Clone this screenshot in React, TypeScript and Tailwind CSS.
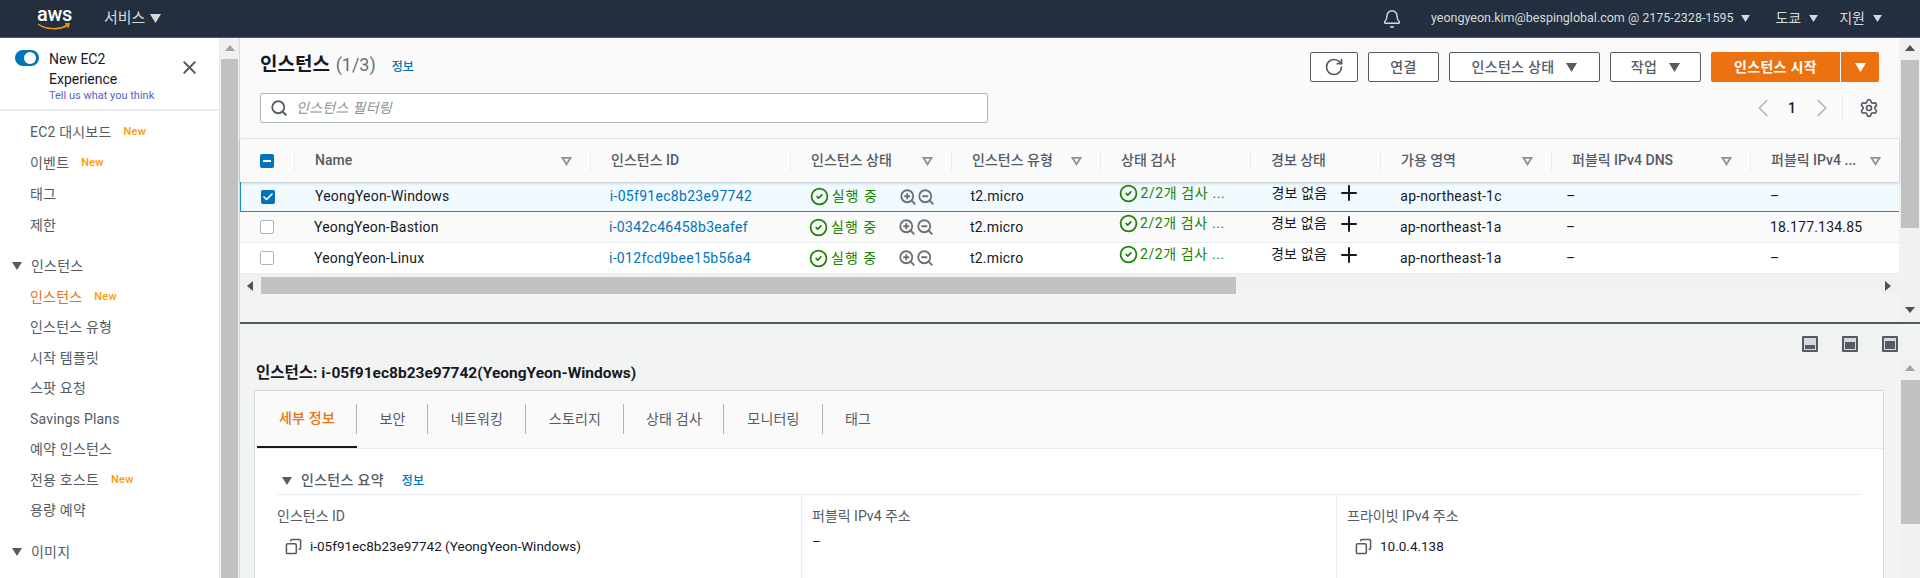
import React from 'react';
import { Bell, Check, ChevronLeft, ChevronRight, CircleCheck, Copy, Plus, RotateCw, Search, Settings, X, ZoomIn, ZoomOut } from 'lucide-react';

const Caret = ({ className }: { className: string }) => (
  <svg viewBox="0 0 10 8" className={className} fill="currentColor">
    <path d="M0 0h10L5 8z" />
  </svg>
);

const FilterCaret = () => (
  <svg viewBox="0 0 12 10" className="w-[11px] h-[10px] shrink-0 text-[#879596]" fill="none" stroke="currentColor" strokeWidth="2">
    <path d="M1.5 1.5h9L6 8.5z" />
  </svg>
);

const TriBtn = ({ dir }: { dir: 'up' | 'down' | 'left' | 'right' }) => {
  const d = { up: 'M0 7L5 1l5 6z', down: 'M0 1l5 6 5-6z', left: 'M7 0v10L1 5z', right: 'M1 0v10l6-5z' }[dir];
  return (
    <svg viewBox="0 0 10 10" className="w-[10px] h-[10px]" fill="currentColor">
      <path d={d} />
    </svg>
  );
};

const New = () => <span className="text-[11px] font-medium text-[#ff9900]">New</span>;

const NavItem = ({ label, isNew, active, tall }: { label: string; isNew?: boolean; active?: boolean; tall?: boolean }) => (
  <div className={`flex items-center gap-[12px] pl-[30px] tracking-[0.2px] ${tall ? 'h-[31px]' : 'h-[30.5px]'} ${active ? 'text-[#ec7211]' : 'text-[#545b64]'}`}>
    <span>{label}</span>
    {isNew && <New />}
  </div>
);

const Sidebar = () => (
  <aside className="w-[220px] shrink-0 bg-white border-r border-[#eaeded] text-[14px] overflow-hidden">
    <div className="h-[73px] border-b-2 border-[#eaeded] flex pl-[15px] pt-[11px] relative">
      <div className="w-[24px] h-[16px] mt-[1px] rounded-full bg-[#0073bb] flex items-center justify-end pr-[3px] shrink-0">
        <div className="w-[12px] h-[12px] rounded-full bg-white" />
      </div>
      <div className="ml-[10px]">
        <div className="text-[#16191f] leading-[20px]">New EC2</div>
        <div className="text-[#16191f] leading-[20px]">Experience</div>
        <div className="text-[11px] leading-[14px] text-[#5a62c6]">Tell us what you think</div>
      </div>
      <X className="ml-[25px] mt-[8px] text-[#545b64]" size={21} strokeWidth={2.2} />
    </div>
    <div className="pt-[6px]">
      <NavItem label="EC2 대시보드" isNew tall />
      <NavItem label="이벤트" isNew tall />
      <NavItem label="태그" tall />
      <NavItem label="제한" tall />
      <div className="mt-[9px] h-[32px] flex items-center pl-[12px] gap-[9px] text-[#545b64]">
        <Caret className="w-[10px] h-[8px] text-[#545b64]" />
        <span className="tracking-[0.2px]">인스턴스</span>
      </div>
      <NavItem label="인스턴스" isNew active />
      <NavItem label="인스턴스 유형" />
      <NavItem label="시작 템플릿" />
      <NavItem label="스팟 요청" />
      <NavItem label="Savings Plans" />
      <NavItem label="예약 인스턴스" />
      <NavItem label="전용 호스트" isNew />
      <NavItem label="용량 예약" />
      <div className="mt-[10px] h-[32px] flex items-center pl-[12px] gap-[9px] text-[#545b64]">
        <Caret className="w-[10px] h-[8px] text-[#545b64]" />
        <span className="tracking-[0.2px]">이미지</span>
      </div>
    </div>
  </aside>
);

const TopBar = () => (
  <header className="h-[38px] shrink-0 bg-[#232f3e] border-b border-[#545b64] flex items-center text-[13px] text-[#d5dbdb]">
    <div className="ml-[37px] w-[34px] h-[28px] relative shrink-0">
      <div className="text-[20px] leading-[19px] font-medium text-white tracking-[-0.3px]">aws</div>
      <svg viewBox="0 0 34 8" className="w-[34px] h-[8px] absolute left-0 top-[18px]" fill="none" stroke="#f90" strokeWidth="1.5">
        <path d="M1 1c8 6 22 6 30 1M28 1l4-.5-1 4" />
      </svg>
    </div>
    <span className="ml-[33px] text-[15px]">서비스</span>
    <Caret className="ml-[5px] w-[11px] h-[9px] text-[#d5dbdb]" />
    <Bell className="ml-auto text-[#d5dbdb]" size={20} strokeWidth={1.7} />
    <span className="ml-[29px] text-[12.5px]">yeongyeon.kim@bespinglobal.com @ 2175-2328-1595</span>
    <Caret className="ml-[8px] w-[9px] h-[7px] text-[#d5dbdb]" />
    <span className="ml-[25px] text-[14px]">도쿄</span>
    <Caret className="ml-[8px] w-[9px] h-[7px] text-[#d5dbdb]" />
    <span className="ml-[21px] text-[14px]">지원</span>
    <Caret className="ml-[8px] mr-[38px] w-[9px] h-[7px] text-[#d5dbdb]" />
  </header>
);

const OutlineBtn = ({ label, width, caret }: { label: string; width: string; caret?: boolean }) => (
  <button className={`${width} h-[30px] border border-[#545b64] rounded-[2px] bg-white flex items-center justify-center gap-[12px] text-[14px] font-medium tracking-[0.3px] text-[#545b64]`}>
    <span>{label}</span>
    {caret && <Caret className="w-[11px] h-[9px] text-[#545b64]" />}
  </button>
);

const Toolbar = () => (
  <div className="h-[101px] shrink-0 border-b border-[#eaeded] pl-[20px] pr-[20px]">
    <div className="flex items-start pt-[14px]">
      <h1 className="text-[19px] leading-[26px] font-bold text-[#16191f]">
        인스턴스 <span className="ml-[1px] text-[18px] font-normal text-[#687078]">(1/3)</span>
      </h1>
      <a className="ml-[16px] mt-[6px] text-[12px] font-medium text-[#0073bb]">정보</a>
      <div className="ml-auto flex">
        <button className="w-[48px] h-[30px] border border-[#545b64] rounded-[2px] bg-white flex items-center justify-center text-[#545b64]">
          <RotateCw size={20} strokeWidth={2} />
        </button>
        <div className="ml-[10px]"><OutlineBtn label="연결" width="w-[71px]" /></div>
        <div className="ml-[10px]"><OutlineBtn label="인스턴스 상태" width="w-[151px]" caret /></div>
        <div className="ml-[10px]"><OutlineBtn label="작업" width="w-[91px]" caret /></div>
        <div className="ml-[10px] h-[30px] w-[168px] bg-[#ec7211] rounded-[2px] flex text-white text-[14px] font-bold tracking-[0.3px]">
          <span className="w-[130px] flex items-center justify-center border-r border-white">인스턴스 시작</span>
          <span className="flex-1 flex items-center justify-center"><Caret className="w-[11px] h-[9px] text-white" /></span>
        </div>
      </div>
    </div>
    <div className="flex items-center mt-[11px]">
      <div className="w-[728px] h-[30px] border border-[#aab7b8] rounded-[2px] bg-white flex items-center pl-[9px] gap-[8px]">
        <Search size={18} strokeWidth={2.4} className="text-[#545b64]" />
        <span className="text-[14px] italic tracking-[0.3px] text-[#879596]">인스턴스 필터링</span>
      </div>
      <div className="ml-auto flex items-center h-[30px] text-[#aab7b8]">
        <ChevronLeft size={30} strokeWidth={1.3} />
        <span className="ml-[8px] w-[12px] text-center text-[14px] font-medium text-[#16191f]">1</span>
        <ChevronRight className="ml-[9px]" size={30} strokeWidth={1.3} />
        <div className="ml-[5px] h-[30px] border-l border-[#eaeded]" />
        <Settings className="ml-[16px] text-[#545b64]" size={20} strokeWidth={2} />
      </div>
    </div>
  </div>
);

const columns = [
  { title: 'Name', w: 'w-[296px]', filter: true },
  { title: '인스턴스 ID', w: 'w-[200px]' },
  { title: '인스턴스 상태', w: 'w-[161px]', filter: true },
  { title: '인스턴스 유형', w: 'w-[149px]', filter: true },
  { title: '상태 검사', w: 'w-[150px]' },
  { title: '경보 상태', w: 'w-[130px]' },
  { title: '가용 영역', w: 'w-[171px]', filter: true },
  { title: '퍼블릭 IPv4 DNS', w: 'w-[199px]', filter: true },
  { title: '퍼블릭 IPv4 ...', w: 'w-[149px]', filter: true },
];

const rows = [
  { name: 'YeongYeon-Windows', id: 'i-05f91ec8b23e97742', az: 'ap-northeast-1c', ip: '–', selected: true },
  { name: 'YeongYeon-Bastion', id: 'i-0342c46458b3eafef', az: 'ap-northeast-1a', ip: '18.177.134.85' },
  { name: 'YeongYeon-Linux', id: 'i-012fcd9bee15b56a4', az: 'ap-northeast-1a', ip: '–' },
];

const TableHeader = () => (
  <div className="h-[43px] flex items-center shadow-[0_1px_3px_rgba(0,28,36,0.25)] relative z-10 bg-[#fafafa] text-[14px] font-medium text-[#545b64]">
    <div className="w-[54px] pl-[20px] flex">
      <div className="w-[14px] h-[14px] rounded-[2px] bg-[#0073bb] flex items-center justify-center">
        <div className="w-[8px] h-[2px] bg-white" />
      </div>
    </div>
    {columns.map(c => (
      <div key={c.title} className={`${c.w} h-[21px] border-l border-[#eaeded] pl-[20px] pr-[18px] flex items-center justify-between`}>
        <span className="whitespace-nowrap">{c.title}</span>
        {c.filter && <FilterCaret />}
      </div>
    ))}
  </div>
);

const TableRow = ({ r, i }: { r: (typeof rows)[number]; i: number }) => {
  const rowClass = r.selected
    ? 'h-[30px] bg-[#f1faff] border-b border-l border-[#1a8fbf]'
    : i === 1
      ? 'h-[31px] bg-[#fafafa] border-b border-[#eaeded]'
      : 'h-[31px] bg-white border-b border-[#eaeded]';
  return (
    <div className={`flex items-center text-[14px] tracking-[0.2px] text-[#16191f] ${rowClass}`}>
      <div className="w-[54px] pl-[20px] flex">
        {r.selected ? (
          <div className="w-[14px] h-[14px] rounded-[2px] bg-[#0073bb] flex items-center justify-center">
            <Check size={12} strokeWidth={3.5} className="text-white" />
          </div>
        ) : (
          <div className="w-[14px] h-[14px] rounded-[2px] bg-white border border-[#aab7b8]" />
        )}
      </div>
      <div className="w-[296px] pl-[20px]">{r.name}</div>
      <div className="w-[200px] pl-[19px] tracking-[0.3px] text-[#0073bb]">{r.id}</div>
      <div className="w-[161px] pl-[19px] flex items-center text-[#1d8102]">
        <CircleCheck size={19} strokeWidth={2.2} />
        <span className="ml-[3px] w-[67px] tracking-[1px] whitespace-nowrap">실행 중</span>
        <span className="flex text-[#687078]">
          <ZoomIn size={18} strokeWidth={2.4} />
          <ZoomOut size={18} strokeWidth={2.4} />
        </span>
      </div>
      <div className="w-[149px] pl-[19px]">t2.micro</div>
      <div className="w-[150px] pl-[19px] flex items-center text-[#1d8102] -mt-[7px]">
        <CircleCheck size={19} strokeWidth={2.2} />
        <span className="ml-[2px] tracking-[0.6px] whitespace-nowrap">2/2개 검사 ...</span>
      </div>
      <div className="w-[130px] pl-[21px] flex items-center -mt-[7px]">
        <span>경보 없음</span>
        <Plus className="ml-[10px]" size={24} strokeWidth={2} />
      </div>
      <div className="w-[171px] pl-[20px]">{r.az}</div>
      <div className="w-[199px] pl-[15px]">–</div>
      <div className="w-[149px] pl-[20px] whitespace-nowrap">{r.ip}</div>
    </div>
  );
};

const HScroll = () => (
  <div className="h-[20px] bg-[#f1f1f1] flex items-center text-[#505050] pt-[3px]">
    <div className="w-[21px] flex justify-center"><TriBtn dir="left" /></div>
    <div className="w-[975px] h-[17px] bg-[#c1c1c1]" />
    <div className="ml-auto w-[21px] flex justify-center"><TriBtn dir="right" /></div>
  </div>
);

const Field = ({ label, value, copy, wide }: { label: string; value: string; copy?: boolean; wide: string }) => (
  <div className={`${wide} border-l first:border-l-0 border-[#eaeded] pl-[10px] first:pl-0 h-[84px]`}>
    <div className="text-[14px] leading-[20px] mt-[11px] text-[#545b64] whitespace-nowrap">{label}</div>
    <div className={`flex items-center text-[13.5px] leading-[20px] text-[#16191f] ${copy ? 'mt-[10px] pl-[8px]' : 'mt-[5px]'}`}>
      {copy && <Copy size={17} strokeWidth={2.2} className="text-[#545b64] mr-[8px] -scale-x-100" />}
      <span>{value}</span>
    </div>
  </div>
);

const LayoutIcon = ({ inner }: { inner: string }) => (
  <div className="w-[16px] h-[16px] bg-[#545b64] rounded-[1px] p-[2px]">
    <div className="w-full h-full bg-[#d5dbdb] p-[1px] flex flex-col justify-end">
      <div className={`${inner} bg-[#545b64]`} />
    </div>
  </div>
);

const tabs = ['세부 정보', '보안', '네트워킹', '스토리지', '상태 검사', '모니터링', '태그'];
const tabWidths = ['w-[100px]', 'w-[71px]', 'w-[98px]', 'w-[98px]', 'w-[100px]', 'w-[99px]', 'w-[70px]'];

const Details = () => (
  <div className="flex-1 min-h-0 flex flex-col bg-[#f2f3f3] overflow-hidden">
    <div className="h-[34px] shrink-0 flex items-center justify-end gap-[24px] pr-[22px] pt-[6px]">
      <LayoutIcon inner="h-[4px]" />
      <LayoutIcon inner="h-[7px]" />
      <LayoutIcon inner="h-[8px]" />
    </div>
    <div className="flex-1 min-h-0 flex">
      <div className="flex-1 min-w-0 pl-[14px] pr-[15px]">
        <div className="text-[15.5px] leading-[20px] font-bold text-[#16191f] pl-[2px] pt-[5px] h-[32px] whitespace-nowrap">
          인스턴스: i-05f91ec8b23e97742(YeongYeon-Windows)
        </div>
        <div className="bg-white border-x border-t border-[#d5dbdb] h-[300px]">
          <div className="h-[58px] bg-[#fafafa] border-b border-[#eaeded] flex items-center pl-[2px]">
            {tabs.map((t, i) => (
              <div key={t} className={`${tabWidths[i]} h-[57px] relative flex items-center justify-center text-[14px] tracking-[0.2px] ${i === 0 ? 'text-[#ec7211] font-medium border-b-2 border-[#16191f]' : 'text-[#545b64]'}`}>
                <span>{t}</span>
                {i < tabs.length - 1 && <div className="absolute right-0 top-[13px] h-[30px] border-r border-[#aab7b8]" />}
              </div>
            ))}
          </div>
          <div className="pl-[22px] pr-[21px]">
            <div className="h-[46px] pt-[18px] border-b border-[#eaeded] flex items-center text-[14px]">
              <Caret className="ml-[5px] w-[10px] h-[8px] text-[#545b64]" />
              <span className="ml-[9px] font-medium tracking-[0.3px] text-[#545b64]">인스턴스 요약</span>
              <a className="ml-[18px] text-[12px] font-medium text-[#0073bb]">정보</a>
            </div>
            <div className="flex">
              <Field wide="w-[524px]" label="인스턴스 ID" value="i-05f91ec8b23e97742 (YeongYeon-Windows)" copy />
              <Field wide="w-[535px]" label="퍼블릭 IPv4 주소" value="–" />
              <Field wide="flex-1" label="프라이빗 IPv4 주소" value="10.0.4.138" copy />
            </div>
          </div>
        </div>
      </div>
      <div className="w-[21px] shrink-0 bg-[#f1f1f1] flex flex-col items-center text-[#a3a3a3]">
        <div className="h-[22px] flex items-center justify-center"><TriBtn dir="up" /></div>
        <div className="w-[19px] ml-[1px] h-[144px] bg-[#c1c1c1]" />
      </div>
    </div>
  </div>
);

export default function App() {
  return (
    <div className="h-[578px] w-[1920px] flex flex-col overflow-hidden font-['Roboto','Noto_Sans_CJK_KR',sans-serif]">
      <TopBar />
      <div className="flex-1 min-h-0 flex">
        <Sidebar />
        <div className="w-[20px] shrink-0 bg-[#f1f1f1] flex flex-col items-center text-[#a3a3a3] border-r border-[#d5dbdb]">
          <div className="h-[21px] flex items-center justify-center"><TriBtn dir="up" /></div>
          <div className="w-[17px] flex-1 bg-[#c1c1c1]" />
        </div>
        <main className="flex-1 min-w-0 flex flex-col">
          <div className="h-[286px] shrink-0 flex border-b-2 border-[#545b64] relative">
            <div className="flex-1 min-w-0 bg-[#fafafa] flex flex-col">
              <Toolbar />
              <TableHeader />
              {rows.map((r, i) => <TableRow key={r.id} r={r} i={i} />)}
              <HScroll />
              <div className="flex-1 bg-[#f2f3f3]" />
            </div>
            <div className="w-[21px] shrink-0 bg-[#f1f1f1] flex flex-col items-center text-[#505050]">
              <div className="h-[22px] flex items-center justify-center"><TriBtn dir="up" /></div>
              <div className="w-[18px] h-[168px] bg-[#c1c1c1]" />
              <div className="mt-auto h-[22px] flex items-center justify-center"><TriBtn dir="down" /></div>
            </div>
          </div>
          <Details />
        </main>
      </div>
    </div>
  );
}
